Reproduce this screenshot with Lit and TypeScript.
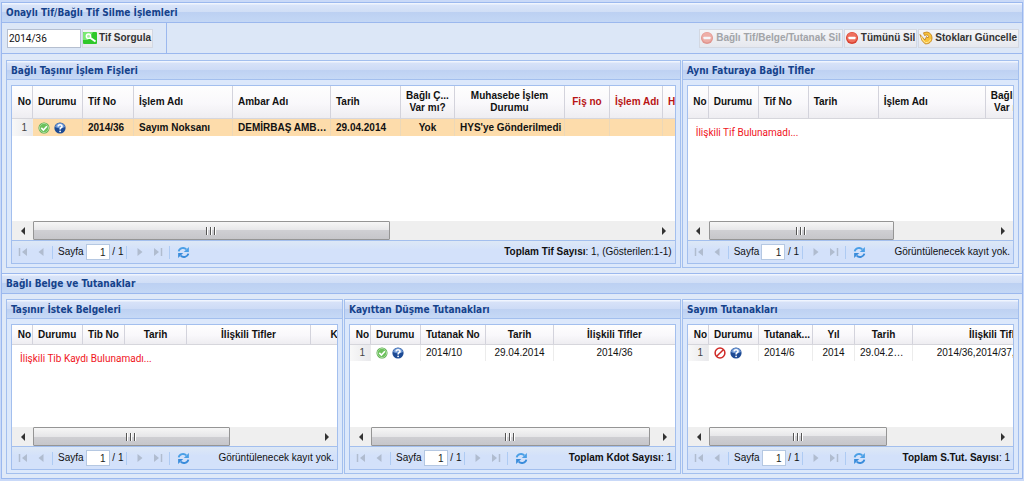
import { LitElement, html, css, svg, nothing, TemplateResult } from "lit";
import { customElement, property } from "lit/decorators.js";
import { classMap } from "lit/directives/class-map.js";

type Align = "left" | "center";

interface Column {
  label: string | string[];
  width: number;
  align?: Align;
  headAlign?: Align;
  red?: boolean;
}

interface GridData {
  name: string;
  columns: Column[];
  row?: (string | TemplateResult)[];
  empty?: string;
  selected?: boolean;
  tall?: boolean;
  thumb: number;
  summaryLabel?: string;
  summary: string;
}

const okIcon = html`<svg class="ico" viewBox="0 0 12 12" role="img" aria-label="Onaylı">
  <circle cx="6" cy="6" r="5.5" fill="#4aa53c" />
  <circle cx="6" cy="6" r="4.6" fill="#6cc15c" stroke="#c9ebc0" stroke-width=".7" />
  <path d="M3.3 5.9 5.4 8 8.9 4.2" fill="none" stroke="#fff" stroke-width="1.6" />
</svg>`;

const helpIcon = html`<svg class="ico" viewBox="0 0 12 12" role="img" aria-label="Bilgi">
  <circle cx="6" cy="6" r="5.6" fill="#1d4a94" />
  <path d="M1 5a5.1 5.1 0 0 1 10 0C8 6.600 4 6.600 1 5z" fill="#6f98d4" />
  <path d="M4.100 4.500C4.100 2.300 8 2.200 8 4.400 8 5.700 6.100 5.800 6.100 7.400" fill="none" stroke="#fff" stroke-width="1.600" />
  <circle cx="6.100" cy="9.300" r=".9" fill="#fff" />
</svg>`;

const bannedIcon = html`<svg class="ico" viewBox="0 0 12 12" role="img" aria-label="İptal">
  <circle cx="6" cy="6" r="4.900" fill="#fff" stroke="#cf2a27" stroke-width="1.500" />
  <path d="M2.700 9.300 9.300 2.700" stroke="#cf2a27" stroke-width="1.500" />
</svg>`;

const minusIcon = html`<svg class="bico" viewBox="0 0 14 14" aria-hidden="true">
  <circle cx="7" cy="7" r="6" fill="#d9412f" />
  <circle cx="7" cy="6.500" r="5" fill="#ee6f5d" />
  <rect x="3.500" y="5.700" width="7" height="2.500" rx=".6" fill="#fff" />
</svg>`;

const searchIcon = html`<svg class="bico" viewBox="0 0 14 14" aria-hidden="true">
  <rect x="0" y="1" width="14" height="12" rx="1" fill="#2fc82a" />
  <path d="M0 9V2l1-1h9L5 9z" fill="#7be873" />
  <circle cx="5.500" cy="5.200" r="2.200" fill="#a8f0a0" stroke="#fff" stroke-width="1.400" />
  <path d="M7.200 6.800 12.500 10.500" stroke="#fff" stroke-width="2" />
</svg>`;

const updateIcon = html`<svg class="bico" viewBox="0 0 14 14" aria-hidden="true">
  <path
    d="M1 3.500 3 9.500 6 12.800c4 .4 7-2 7-5.800C13 4 11.500 1.800 8 1L4.500 1.800l1 2.700 2.500-.7C9.800 4.500 10 6 9 7L7.500 5.500 6 9z"
    fill="#f8c23a" stroke="#c07f16" stroke-width=".8" stroke-linejoin="round" />
  <path d="M2.300 5.500 4 9.300 6.500 11.600c2.600.1 4.300-1.200 5-3.200" fill="none" stroke="#ffe9a0" stroke-width="1" />
</svg>`;

const arrow = (kind: "first" | "prev" | "next" | "last") => {
  const shape = {
    first: svg`<path d="M1.500 1v8" stroke-width="1.500"/><path class="f" d="M9 1v8L4 5z"/>`,
    prev: svg`<path class="f" d="M7.500 1v8L2.500 5z"/>`,
    next: svg`<path class="f" d="M2.500 1v8L7.500 5z"/>`,
    last: svg`<path class="f" d="M1 1v8L6 5z"/><path d="M8.500 1v8" stroke-width="1.500"/>`,
  }[kind];
  return html`<svg class="nav" viewBox="0 0 10 10" aria-hidden="true">${shape}</svg>`;
};

const refreshIcon = html`<svg class="refresh" viewBox="0 0 14 14" aria-hidden="true">
  <path d="M1.800 5.800C2.500 2.200 7.500.8 10 3.700" fill="none" stroke="#4a9fe6" stroke-width="2" />
  <path d="M12.800 1v5.500H7.300z" fill="#4a9fe6" />
  <path d="M12.200 8.200C11.500 11.800 6.500 13.200 4 10.300" fill="none" stroke="#3a8cdb" stroke-width="2" />
  <path d="M1.200 13V7.500h5.500z" fill="#3a8cdb" />
</svg>`;

@customElement("grid-panel")
export class GridPanel extends LitElement {
  @property({ attribute: false }) data!: GridData;

  static styles = css`
    :host {
      display: flex;
      flex-direction: column;
      min-width: 0;
      border: 1px solid #a3bfee;
      background: #dce8fb;
    }
    .title {
      margin: 0;
      height: 18px;
      padding: 0 4px;
      font: bold 10px/19px "DejaVu Sans Condensed", "DejaVu Sans", sans-serif;
      color: #15428b;
      white-space: nowrap;
      border-bottom: 1px solid #a3bfee;
      background: linear-gradient(#f0f5fe 0 1px, #d7e2f8 2px, #cddbf6 9px, #bed1f2 9px, #c6d9f6 18px);
    }
    .grid {
      flex: 1;
      display: flex;
      flex-direction: column;
      min-height: 0;
      margin: 5px 4px 3px;
      border: 1px solid #a3bfee;
      background: #fff;
    }
    .view {
      flex: 1;
      overflow: hidden;
      background: #fff;
    }
    table {
      table-layout: fixed;
      border-collapse: separate;
      border-spacing: 0;
      min-width: 100%;
    }
    th,
    td {
      box-sizing: border-box;
      padding: 0 0 0 5px;
      overflow: hidden;
      white-space: nowrap;
      text-align: left;
      line-height: 12px;
    }
    th {
      height: 20px;
      font-weight: bold;
      border-right: 1px solid #d3d3dc;
      border-bottom: 1px solid #d6d6dc;
      background: linear-gradient(#fefefe, #f9f8fb 55%, #eeedf1);
    }
    .tall th {
      height: 33px;
    }
    td {
      height: 16px;
      border-right: 1px solid #ececec;
      text-overflow: ellipsis;
    }
    .tall td {
      height: 17px;
    }
    .line {
      display: block;
    }
    .center {
      text-align: center;
      padding: 0 5px;
    }
    .red {
      color: #b81414;
    }
    th.num,
    td.num {
      padding: 0 1px 0 0;
      text-align: right;
    }
    td.num {
      padding-right: 5px;
      color: #444;
      font-weight: normal;
      background: linear-gradient(90deg, #f8f8f8, #e9e9ec);
    }
    .selected td:not(.num) {
      font-weight: bold;
      background: #fddcab;
      border-right-color: #ecd8b8;
    }
    .status {
      display: flex;
      gap: 4px;
    }
    .ico {
      width: 12px;
      height: 12px;
      flex: none;
    }
    .empty {
      margin: 0;
      padding: 8px;
      font: 10px/12px Roboto, "DejaVu Sans", sans-serif;
      color: #f0141c;
      white-space: nowrap;
    }
    .scroll {
      display: flex;
      height: 19px;
      background: #efefef;
    }
    .scroll button {
      width: 21px;
      padding: 0;
      border: 0;
      background: none;
      display: grid;
      place-items: center;
    }
    .scroll svg {
      width: 6px;
      height: 8px;
      fill: #333;
    }
    .track {
      flex: 1;
      display: flex;
    }
    .thumb {
      box-sizing: border-box;
      display: flex;
      justify-content: center;
      align-items: center;
      gap: 2px;
      border: 1px solid #959595;
      border-radius: 1px;
      background: linear-gradient(#f6f6f6, #e6e6e8 50%, #cfcfd3 50%, #c6c6ca);
    }
    .grip {
      width: 1px;
      height: 8px;
      border-right: 1px solid #fff;
      background: #555;
    }
    .pager {
      display: flex;
      align-items: center;
      height: 22px;
      padding: 0 3px;
      border-top: 1px solid #a3bfee;
      background: linear-gradient(#dde8f6, #d3e1fa 40%, #d3e1fa);
      white-space: nowrap;
    }
    .pager button {
      width: 16px;
      height: 16px;
      padding: 0;
      border: 0;
      background: none;
      display: grid;
      place-items: center;
    }
    .pages {
      display: flex;
      gap: 2px;
    }
    .nav {
      width: 10px;
      height: 10px;
      fill: none;
      stroke: #b0bccf;
    }
    .nav .f {
      fill: #b0bccf;
      stroke: none;
    }
    .refresh {
      width: 13px;
      height: 13px;
    }
    .sep {
      width: 1px;
      height: 13px;
      background: #aecbf3;
      margin: 0 5px 0 3px;
    }
    label {
      display: flex;
      align-items: center;
      gap: 2px;
    }
    input {
      box-sizing: border-box;
      width: 24px;
      height: 16px;
      padding: 0 3px;
      border: 1px solid #b5c8e2;
      background: #fff;
      font: inherit;
      color: #222;
      text-align: right;
    }
    .summary {
      margin-left: auto;
    }
  `;

  render() {
    const d = this.data;
    const total = d.columns.reduce((sum, c) => sum + c.width, 0);
    return html`
      <h3 class="title">${d.name}</h3>
      <div class="grid">
        <div class="view">
          <table class=${classMap({ tall: !!d.tall })} style="width:${total}px">
            <colgroup>
              ${d.columns.map((c) => html`<col style="width:${c.width}px" />`)}
            </colgroup>
            <thead>
              <tr>
                ${d.columns.map(
                  (c, i) => html`<th
                    scope="col"
                    class=${classMap({ num: i === 0, red: !!c.red, center: (c.headAlign ?? c.align) === "center" })}
                  >
                    ${Array.isArray(c.label) ? c.label.map((l) => html`<span class="line">${l}</span>`) : c.label}
                  </th>`
                )}
              </tr>
            </thead>
            ${d.row
              ? html`<tbody>
                  <tr class=${classMap({ selected: !!d.selected })}>
                    ${d.columns.map(
                      (c, i) => html`<td class=${classMap({ num: i === 0, center: c.align === "center" })}>${d.row![i]}</td>`
                    )}
                  </tr>
                </tbody>`
              : nothing}
          </table>
          ${d.empty ? html`<p class="empty">${d.empty}</p>` : nothing}
        </div>
        <div class="scroll">
          <button type="button" aria-label="Sola kaydır"><svg viewBox="0 0 6 8"><path d="M5 0v8L1 4z" /></svg></button>
          <div class="track">
            <div class="thumb" style="width:${d.thumb}%">
              <i class="grip"></i><i class="grip"></i><i class="grip"></i>
            </div>
          </div>
          <button type="button" aria-label="Sağa kaydır"><svg viewBox="0 0 6 8"><path d="M1 0v8L5 4z" /></svg></button>
        </div>
        <div class="pager">
          <div class="pages">
            <button type="button" disabled aria-label="İlk sayfa">${arrow("first")}</button>
            <button type="button" disabled aria-label="Önceki sayfa">${arrow("prev")}</button>
          </div>
          <i class="sep"></i>
          <label>Sayfa <input type="text" value="1" /></label>
          <span>&nbsp;/ 1</span>
          <i class="sep"></i>
          <div class="pages">
            <button type="button" disabled aria-label="Sonraki sayfa">${arrow("next")}</button>
            <button type="button" disabled aria-label="Son sayfa">${arrow("last")}</button>
          </div>
          <i class="sep"></i>
          <button type="button" aria-label="Yenile">${refreshIcon}</button>
          <span class="summary">${d.summaryLabel ? html`<b>${d.summaryLabel}</b>: ` : nothing}${d.summary}</span>
        </div>
      </div>
    `;
  }
}

const status = (first: TemplateResult) => html`<span class="status">${first}${helpIcon}</span>`;
const no: Column = { label: "No", width: 21 };
const state: Column = { label: "Durumu", width: 50 };

const topGrids: GridData[] = [
  {
    name: "Bağlı Taşınır İşlem Fişleri",
    tall: true,
    selected: true,
    thumb: 57.5,
    columns: [
      no,
      state,
      { label: "Tif No", width: 51 },
      { label: "İşlem Adı", width: 99 },
      { label: "Ambar Adı", width: 98 },
      { label: "Tarih", width: 70 },
      { label: ["Bağlı Ç...", "Var mı?"], width: 54, align: "center" },
      { label: ["Muhasebe İşlem", "Durumu"], width: 110, headAlign: "center" },
      { label: "Fiş no", width: 45, red: true, headAlign: "center" },
      { label: "İşlem Adı", width: 53, red: true },
      { label: "Hata", width: 60, red: true },
    ],
    row: [
      "1",
      status(okIcon),
      "2014/36",
      "Sayım Noksanı",
      "DEMİRBAŞ AMBARI",
      "29.04.2014",
      "Yok",
      "HYS'ye Gönderilmedi",
      "",
      "",
      "",
    ],
    summaryLabel: "Toplam Tif Sayısı",
    summary: "1, (Gösterilen:1-1)",
  },
  {
    name: "Aynı Faturaya Bağlı Tİfler",
    tall: true,
    thumb: 65.5,
    columns: [
      no,
      state,
      { label: "Tif No", width: 50 },
      { label: "Tarih", width: 70 },
      { label: "İşlem Adı", width: 107 },
      { label: ["Bağlı Ç...", "Var mı?"], width: 54, align: "center" },
    ],
    empty: "İlişkili Tif Bulunamadı...",
    summary: "Görüntülenecek kayıt yok.",
  },
];

const bottomGrids: GridData[] = [
  {
    name: "Taşınır İstek Belgeleri",
    thumb: 69.5,
    columns: [
      no,
      state,
      { label: "Tib No", width: 42 },
      { label: "Tarih", width: 62, align: "center" },
      { label: "İlişkili Tifler", width: 124, align: "center" },
      { label: "Kaydeden", width: 88, align: "center" },
    ],
    empty: "İlişkili Tib Kaydı Bulunamadı...",
    summary: "Görüntülenecek kayıt yok.",
  },
  {
    name: "Kayıttan Düşme Tutanakları",
    thumb: 98.5,
    columns: [
      no,
      state,
      { label: "Tutanak No", width: 65 },
      { label: "Tarih", width: 68, align: "center" },
      { label: "İlişkili Tifler", width: 122, align: "center" },
    ],
    row: ["1", status(okIcon), "2014/10", "29.04.2014", "2014/36"],
    summaryLabel: "Toplam Kdot Sayısı",
    summary: "1",
  },
  {
    name: "Sayım Tutanakları",
    thumb: 63,
    columns: [
      no,
      state,
      { label: "Tutanak...", width: 54 },
      { label: "Yıl", width: 42, align: "center" },
      { label: "Tarih", width: 58, align: "center" },
      { label: "İlişkili Tifler", width: 168, align: "center" },
    ],
    row: ["1", status(bannedIcon), "2014/6", "2014", "29.04.2014", "2014/36,2014/37,2014/381"],
    summaryLabel: "Toplam S.Tut. Sayısı",
    summary: "1",
  },
];

@customElement("app-root")
export class AppRoot extends LitElement {
  static styles = css`
    :host {
      box-sizing: border-box;
      display: grid;
      grid-template-rows: minmax(min-content, 272fr) minmax(min-content, 205fr);
      min-height: 100vh;
      padding: 2px 1px;
      background: #c9d9f8;
      font: 10px/12px "Liberation Sans", Arial, sans-serif;
      color: #111;
    }
    section {
      display: flex;
      flex-direction: column;
      min-width: 0;
      border: 1px solid #9bb8ee;
      border-top-width: 0;
      background: #dfe9f8;
    }
    section:first-of-type {
      border-top-width: 1px;
    }
    .title {
      margin: 0;
      height: 19px;
      padding: 0 4px;
      font: bold 10px/20px "DejaVu Sans Condensed", "DejaVu Sans", sans-serif;
      color: #15428b;
      white-space: nowrap;
      border-bottom: 1px solid #9bb8ee;
      background: linear-gradient(#f0f5fe 0 1px, #d9e4f9 2px, #d0def6 9px, #bcd0f2 9px, #c3d7f5 19px);
    }
    .toolbar {
      display: flex;
      align-items: stretch;
      height: 30px;
      border-bottom: 1px solid #9bb8ee;
      background: #dce7f7;
    }
    .query {
      display: flex;
      align-items: center;
      gap: 1px;
      padding: 0 13px 0 5px;
      border-right: 1px solid #9bb8ee;
    }
    .actions {
      flex: 1;
      display: flex;
      align-items: center;
      justify-content: flex-end;
      gap: 1px;
      padding-right: 3px;
    }
    input {
      box-sizing: border-box;
      width: 74px;
      height: 19px;
      padding: 0 1px;
      border: 1px solid #b5bfd0;
      background: #fff;
      font: 10px/14px Roboto, "DejaVu Sans", sans-serif;
      color: #111;
    }
    button {
      box-sizing: border-box;
      display: flex;
      align-items: center;
      gap: 2px;
      height: 19px;
      padding: 0 1px 0 0;
      border: 1px solid #d3d8e2;
      background: linear-gradient(#f4f5f8, #e6e8ee);
      font: bold 10px/12px "Liberation Sans", Arial, sans-serif;
      color: #333;
      white-space: nowrap;
    }
    button:disabled {
      color: #a2a4a8;
    }
    button:disabled svg {
      opacity: 0.5;
    }
    .bico {
      width: 14px;
      height: 14px;
      flex: none;
    }
    .panels {
      flex: 1;
      display: grid;
      gap: 1px;
      padding: 6px 3px 5px 4px;
    }
    .two {
      grid-template-columns: minmax(0, 2fr) minmax(0, 1fr);
    }
    .three {
      grid-template-columns: repeat(3, minmax(0, 1fr));
      padding: 5px 3px 4px 4px;
    }
  `;

  render() {
    return html`
      <section>
        <h2 class="title">Onaylı Tif/Bağlı Tif Silme İşlemleri</h2>
        <div class="toolbar">
          <div class="query">
            <input type="text" value="2014/36" aria-label="Tif No" />
            <button type="button">${searchIcon}Tif Sorgula</button>
          </div>
          <div class="actions">
            <button type="button" disabled>${minusIcon}Bağlı Tif/Belge/Tutanak Sil</button>
            <button type="button">${minusIcon}Tümünü Sil</button>
            <button type="button">${updateIcon}Stokları Güncelle</button>
          </div>
        </div>
        <div class="panels two">${topGrids.map((g) => html`<grid-panel .data=${g}></grid-panel>`)}</div>
      </section>
      <section>
        <h2 class="title">Bağlı Belge ve Tutanaklar</h2>
        <div class="panels three">${bottomGrids.map((g) => html`<grid-panel .data=${g}></grid-panel>`)}</div>
      </section>
    `;
  }
}
